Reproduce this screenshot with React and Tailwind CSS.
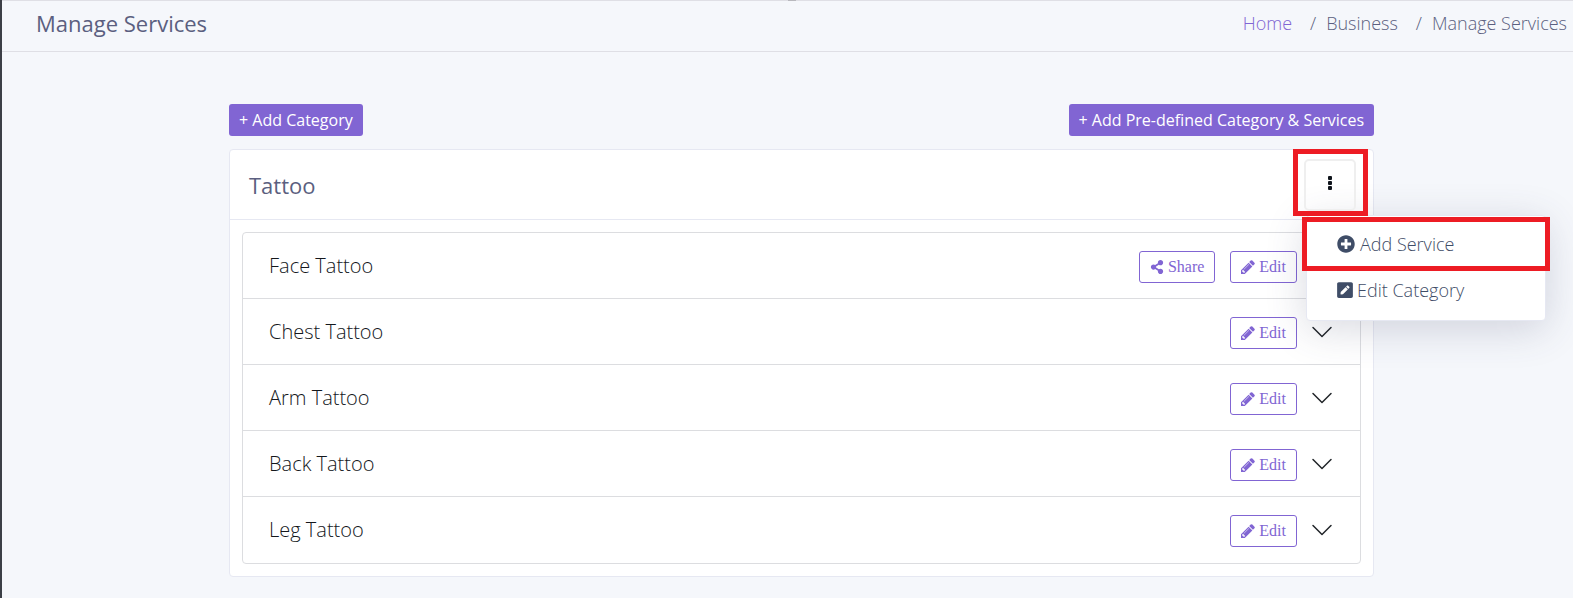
import { FaShareAlt, FaPlusCircle, FaPenSquare } from "react-icons/fa";
import { BsChevronDown } from "react-icons/bs";

const services = [
  { name: "Face Tattoo", share: true },
  { name: "Chest Tattoo" },
  { name: "Arm Tattoo" },
  { name: "Back Tattoo" },
  { name: "Leg Tattoo" },
];

function PencilIcon({ className }) {
  return (
    <svg viewBox="128 128 1536 1536" className={className} fill="currentColor" aria-hidden="true">
      <path d="M491 1536l91-91-235-235-91 91v107h128v128h107zm523-928q0-22-22-22-10 0-17 7l-542 542q-7 7-7 17 0 22 22 22 10 0 17-7l542-542q7-7 7-17zm-54-192l416 416-832 832h-416v-416zm683 96q0 53-37 90l-166 166-416-416 166-165q36-38 90-38 53 0 91 38l235 234q37 39 37 91z" />
    </svg>
  );
}

function PrimaryButton({ children }) {
  return (
    <button type="button" className="h-8 rounded-[3px] bg-[#8165d3] px-[10px] pb-px text-base font-medium leading-5 text-white">
      {children}
    </button>
  );
}

function OutlineButton({ icon: Icon, children }) {
  return (
    <button
      type="button"
      className="flex h-8 items-center gap-1 rounded-[3px] border border-[#8165d3] bg-white px-[10px] font-['Liberation_Serif',serif] text-base text-[#8165d3]"
    >
      <Icon className="size-[14px]" />
      {children}
    </button>
  );
}

function Header() {
  return (
    <header className="flex h-[52px] items-center justify-between border-y border-[#dfdfe5] pb-[6px] pl-[34px] pr-[6px] text-[#5b5f80]">
      <h1 className="text-[22px] font-medium leading-7">Manage Services</h1>
      <nav aria-label="Breadcrumb">
        <ol className="flex text-lg font-light leading-6">
          <li>
            <a href="#home" className="text-[#8165d3]">Home</a>
          </li>
          <li className="flex gap-[10px] pl-[18px]">
            <span aria-hidden="true">/</span>
            <a href="#business">Business</a>
          </li>
          <li className="flex gap-[10px] pl-[18px]" aria-current="page">
            <span aria-hidden="true">/</span>
            Manage Services
          </li>
        </ol>
      </nav>
    </header>
  );
}

function CategoryMenu() {
  return (
    <div className="relative -mt-px">
      <div className="relative z-20 border-[5px] border-[#ed1c24] pl-[6px] pr-[7px] pt-[5px]">
        <button
          type="button"
          aria-label="Category options"
          aria-expanded="true"
          className="flex h-[52px] w-[52px] items-center justify-center rounded-[5px] border-2 border-[#efefef] text-[#10151c]"
        >
          <svg viewBox="0 0 4 14" className="mb-1 h-[14px] w-1" fill="currentColor" aria-hidden="true">
            <rect x="0" y="0" width="4" height="4" rx="1" />
            <rect x="0" y="5" width="4" height="4" rx="1" />
            <rect x="0" y="10" width="4" height="4" rx="1" />
          </svg>
        </button>
      </div>
      <div className="absolute left-[13px] top-[66px] z-10 h-[106px] w-[240px] rounded-[4px] border border-[#e6e8f2] bg-white shadow-[0_8px_40px_rgba(60,65,100,0.2)]">
        <div className="-ml-[5px] mt-[1px] h-[54px] w-[248px] border-[5px] border-[#ed1c24] bg-white">
          <button type="button" className="flex h-full w-full items-center gap-[5px] pl-[30px] text-lg font-light text-[#3f4d67]">
            <FaPlusCircle className="size-[18px]" />
            Add Service
          </button>
        </div>
        <button type="button" className="flex h-[38px] w-full items-center gap-[3px] pl-[29px] text-lg font-light text-[#3f4d67]">
          <FaPenSquare className="size-[18px]" />
          Edit Category
        </button>
      </div>
    </div>
  );
}

export default function App() {
  return (
    <div className="relative min-h-screen border-l-2 border-[#3c3f46] bg-[#f5f7fb] font-['Open_Sans',sans-serif]">
      <span aria-hidden="true" className="absolute left-1/2 top-0 h-px w-2 bg-[#b8b8bd]" />
      <Header />
      <main className="pl-[28px] pt-[52px]">
        <div className="mx-auto max-w-[1145px]">
          <div className="flex items-center justify-between">
            <PrimaryButton>+ Add Category</PrimaryButton>
            <PrimaryButton>+ Add Pre-defined Category &amp; Services</PrimaryButton>
          </div>
          <section className="mt-[13px] rounded-[4px] border border-[#e6e8f2] bg-white">
            <div className="flex h-[70px] items-start justify-between border-b border-[#e6e8f2] pl-[19px] pr-[5px]">
              <h2 className="self-center text-[22px] font-medium leading-7 text-[#5b5f80]">Tattoo</h2>
              <CategoryMenu />
            </div>
            <div className="p-3">
              <ul className="divide-y divide-[#dcdde0] rounded-[4px] border border-[#dcdde0]">
                {services.map((service) => (
                  <li key={service.name} className="flex h-[66px] items-center px-[26px]">
                    <span className="grow text-xl font-light leading-7 text-[#14171c]">{service.name}</span>
                    <div className="flex items-center gap-[15px] pt-[2px]">
                      {service.share && <OutlineButton icon={FaShareAlt}>Share</OutlineButton>}
                      <OutlineButton icon={PencilIcon}>Edit</OutlineButton>
                    </div>
                    <button type="button" aria-label={"Expand " + service.name} className="ml-[13px] text-[#212529]">
                      <BsChevronDown className="size-6" />
                    </button>
                  </li>
                ))}
              </ul>
            </div>
          </section>
        </div>
      </main>
    </div>
  );
}
